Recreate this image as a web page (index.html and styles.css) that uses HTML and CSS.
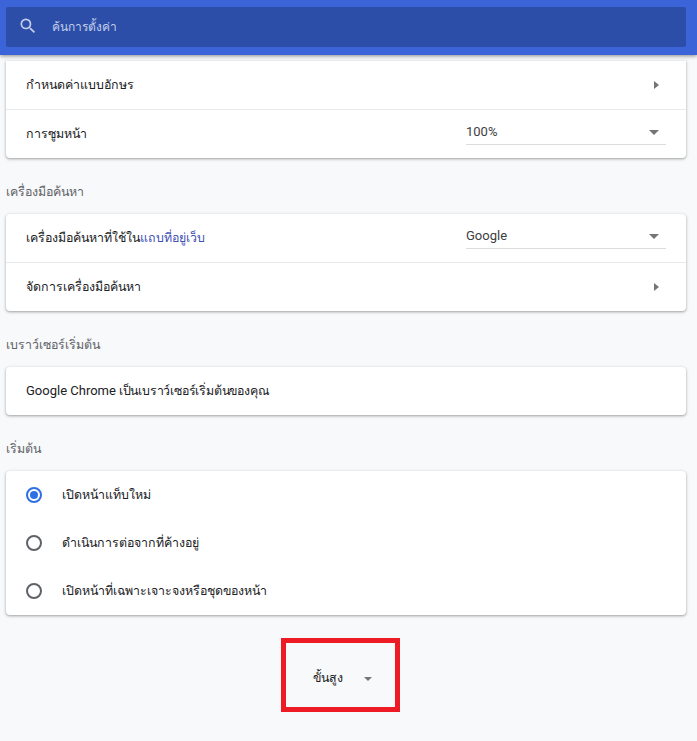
FILE: index.html
```html
<!DOCTYPE html>
<html lang="th">
<head>
<meta charset="utf-8">
<title>การตั้งค่า</title>
<link rel="stylesheet" href="styles.css">
</head>
<body>
<header class="topbar">
  <div class="search">
    <svg class="search-icon" viewBox="0 0 24 24" width="20" height="20"><path d="M15.5 14h-.79l-.28-.27A6.47 6.47 0 0 0 16 9.5 6.5 6.5 0 1 0 9.5 16c1.61 0 3.09-.59 4.23-1.57l.27.28v.79l5 4.99L20.49 19l-4.99-5zm-6 0C7.01 14 5 11.99 5 9.5S7.01 5 9.5 5 14 7.01 14 9.5 11.99 14 9.5 14z"/></svg>
    <span class="search-text">ค้นการตั้งค่า</span>
  </div>
</header>
<main class="content">
  <section class="card card-first">
    <div class="row"><span class="label">กำหนดค่าแบบอักษร</span><span class="arrow"></span></div>
    <div class="row row-line"><span class="label">การซูมหน้า</span>
      <div class="select"><span>100%</span><span class="caret"></span></div>
    </div>
  </section>
  <h2 class="title">เครื่องมือค้นหา</h2>
  <section class="card">
    <div class="row"><span class="label">เครื่องมือค้นหาที่ใช้ใน<a class="link">แถบที่อยู่เว็บ</a></span>
      <div class="select"><span>Google</span><span class="caret"></span></div>
    </div>
    <div class="row row-line"><span class="label">จัดการเครื่องมือค้นหา</span><span class="arrow"></span></div>
  </section>
  <h2 class="title">เบราว์เซอร์เริ่มต้น</h2>
  <section class="card">
    <div class="row"><span class="label label-tight"><span class="latin">Google Chrome</span> เป็นเบราว์เซอร์เริ่มต้นของคุณ</span></div>
  </section>
  <h2 class="title">เริ่มต้น</h2>
  <section class="card">
    <div class="radio-row"><span class="radio radio-on"></span><span class="label">เปิดหน้าแท็บใหม่</span></div>
    <div class="radio-row"><span class="radio"></span><span class="label">ดำเนินการต่อจากที่ค้างอยู่</span></div>
    <div class="radio-row"><span class="radio"></span><span class="label">เปิดหน้าที่เฉพาะเจาะจงหรือชุดของหน้า</span></div>
  </section>
  <div class="advanced-wrap">
    <div class="advanced"><span class="label">ขั้นสูง</span><span class="caret caret-small"></span></div>
  </div>
</main>
</body>
</html>
```
FILE: styles.css
```css
html, body { margin: 0; padding: 0; height: 741px; overflow: hidden; }
body {
  background: #f8f9fa;
  font-family: Roboto, "Noto Sans", "Liberation Sans", sans-serif;
  font-size: 13px;
  color: #202124;
  position: relative;
}
.topbar {
  position: absolute;
  top: 0; left: 0; right: 0;
  height: 55px;
  background: #3b64d8;
  box-shadow: 0 1px 4px rgba(0,0,0,.45);
  padding: 7px 11px 8px 6px;
  box-sizing: border-box;
  z-index: 2;
}
.search {
  height: 40px;
  background: #2c4ea8;
  border-radius: 2px;
  display: flex;
  align-items: center;
  padding: 0 0 2px 12px;
  box-sizing: border-box;
  color: #c3cfe8;
}
.search-icon { fill: #c3cfe8; flex: none; }
.search-text { margin-left: 14px; font-size: 12px; font-weight: 500; }
.content { padding: 61px 11px 0 6px; }
.card {
  background: #fff;
  border-radius: 4px;
  box-shadow: 0 1px 2px rgba(60,64,67,.3), 0 1px 3px 1px rgba(60,64,67,.15);
}
.card-first { border-radius: 0 0 4px 4px; }
.row {
  height: 48px;
  display: flex;
  align-items: center;
  justify-content: space-between;
  padding: 0 20px;
  box-sizing: border-box;
}
.row-line { border-top: 1px solid #e8eaed; height: 49px; }
.label { font-size: 12.4px; line-height: 20px; }
.label-tight { letter-spacing: -.2px; }
.latin { font-size: 13px; letter-spacing: 0; }
.link { color: #3f51b5; }
.arrow {
  width: 0; height: 0;
  border-left: 5px solid #757575;
  border-top: 4px solid transparent;
  border-bottom: 4px solid transparent;
  margin-right: 7px;
}
.select {
  width: 200px;
  height: 22px;
  display: flex;
  align-items: center;
  justify-content: space-between;
  box-sizing: border-box;
  padding-bottom: 4px;
  border-bottom: 1px solid #dadce0;
  color: #3c4043;
}
.caret {
  width: 0; height: 0;
  margin-top: 2px;
  border-top: 5px solid #757575;
  border-left: 5px solid transparent;
  border-right: 5px solid transparent;
  margin-right: 7px;
}
.caret-small {
  border-top-width: 4px;
  border-left-width: 4px;
  border-right-width: 4px;
  margin-right: 0;
}
.title {
  margin: 0;
  font-size: 12.4px;
  font-weight: 400;
  color: #5f6368;
  height: 56px;
  line-height: 20px;
  padding-top: 24px;
  box-sizing: border-box;
}
.radio-row {
  height: 48px;
  display: flex;
  align-items: center;
  padding-left: 20px;
}
.radio {
  border: 2px solid #5f6368;
  border-radius: 50%;
  box-sizing: content-box;
  flex: none;
  margin-right: 20px;
  width: 12px; height: 12px;
  position: relative;
}
.radio-on { border-color: #2f6fe4; }
.radio-on::after {
  content: "";
  position: absolute;
  inset: 2px;
  border-radius: 50%;
  background: #2f6fe4;
}
.advanced-wrap { display: flex; justify-content: center; padding: 23px 11px 0 0; }
.advanced {
  width: 119px;
  height: 74px;
  box-sizing: border-box;
  border: 5px solid #ed1c24;
  padding: 6px 0 0 4px;
  display: flex;
  align-items: center;
  justify-content: center;
  gap: 21px;
}
```
